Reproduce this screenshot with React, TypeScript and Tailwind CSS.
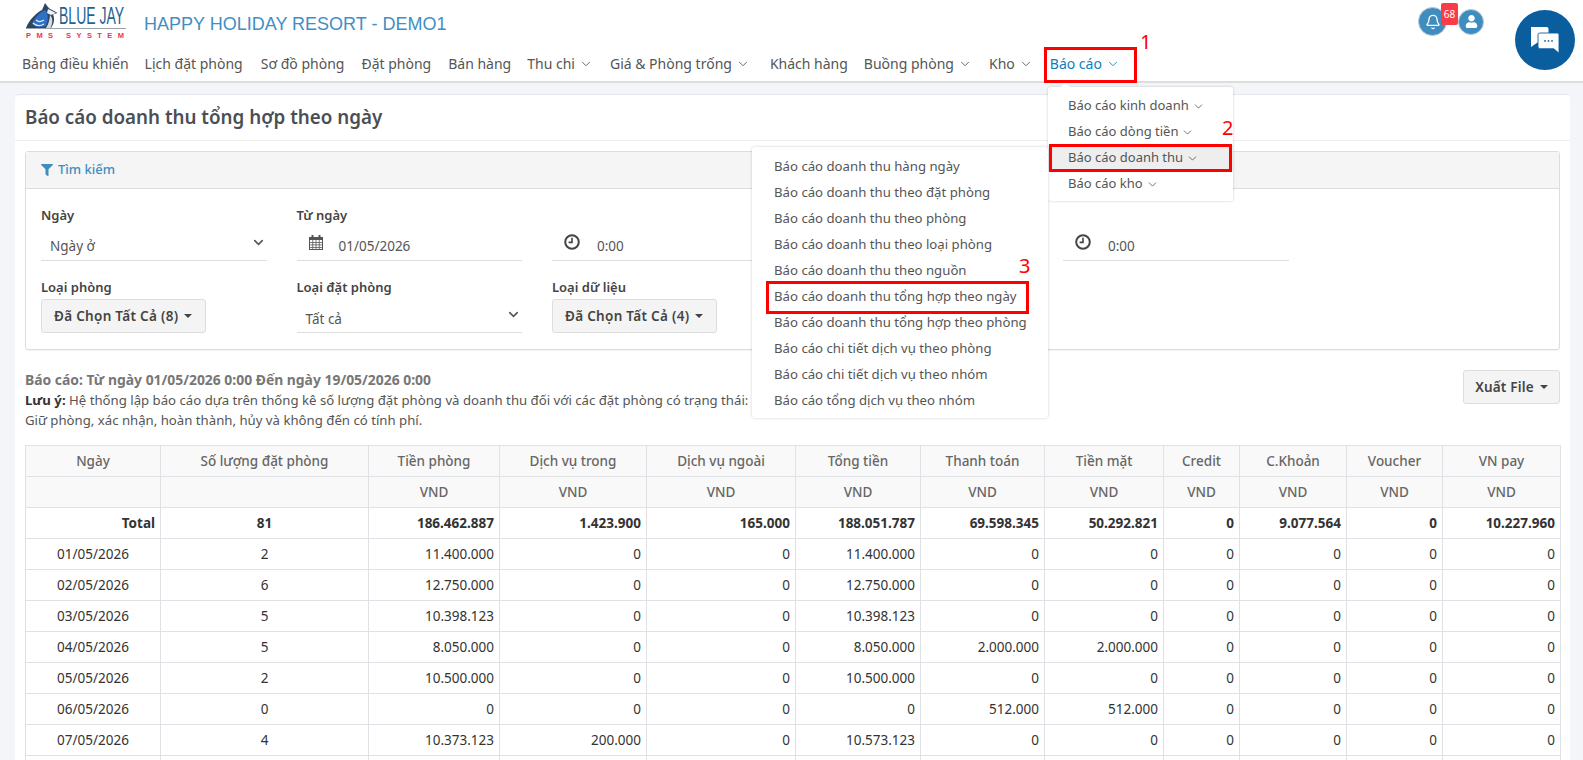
import { ChevronDown, Bell } from "lucide-react";
import { FaFilter, FaUser } from "react-icons/fa";

const navItems = [
  { label: "Bảng điều khiển" },
  { label: "Lịch đặt phòng", cls: "-ml-px" },
  { label: "Sơ đồ phòng", cls: "ml-px" },
  { label: "Đặt phòng" },
  { label: "Bán hàng" },
  { label: "Thu chi", arrow: true, cls: "-ml-px" },
  { label: "Giá & Phòng trống", arrow: true },
  { label: "Khách hàng", cls: "ml-[3px]" },
  { label: "Buồng phòng", arrow: true, cls: "-ml-px" },
  { label: "Kho", arrow: true },
];

const subMenu = [
  "Báo cáo doanh thu hàng ngày",
  "Báo cáo doanh thu theo đặt phòng",
  "Báo cáo doanh thu theo phòng",
  "Báo cáo doanh thu theo loại phòng",
  "Báo cáo doanh thu theo nguồn",
  "Báo cáo doanh thu tổng hợp theo ngày",
  "Báo cáo doanh thu tổng hợp theo phòng",
  "Báo cáo chi tiết dịch vụ theo phòng",
  "Báo cáo chi tiết dịch vụ theo nhóm",
  "Báo cáo tổng dịch vụ theo nhóm",
];

const reportMenu = ["Báo cáo kinh doanh", "Báo cáo dòng tiền", "Báo cáo doanh thu", "Báo cáo kho"];

const headers = ["Ngày", "Số lượng đặt phòng", "Tiền phòng", "Dịch vụ trong", "Dịch vụ ngoài", "Tổng tiền", "Thanh toán", "Tiền mặt", "Credit", "C.Khoản", "Voucher", "VN pay"];

const total = ["Total", "81", "186.462.887", "1.423.900", "165.000", "188.051.787", "69.598.345", "50.292.821", "0", "9.077.564", "0", "10.227.960"];

const rows = [
  ["01/05/2026", "2", "11.400.000", "0", "0", "11.400.000", "0", "0", "0", "0", "0", "0"],
  ["02/05/2026", "6", "12.750.000", "0", "0", "12.750.000", "0", "0", "0", "0", "0", "0"],
  ["03/05/2026", "5", "10.398.123", "0", "0", "10.398.123", "0", "0", "0", "0", "0", "0"],
  ["04/05/2026", "5", "8.050.000", "0", "0", "8.050.000", "2.000.000", "2.000.000", "0", "0", "0", "0"],
  ["05/05/2026", "2", "10.500.000", "0", "0", "10.500.000", "0", "0", "0", "0", "0", "0"],
  ["06/05/2026", "0", "0", "0", "0", "0", "512.000", "512.000", "0", "0", "0", "0"],
  ["07/05/2026", "4", "10.373.123", "200.000", "0", "10.573.123", "0", "0", "0", "0", "0", "0"],
];

const Logo = () => (
  <svg width="108" height="40" viewBox="0 0 108 40" className="shrink-0">
    <path d="M1 26 C4 18 11 11 17 8 L20 1 L23 5 L25 7 C27 8 30 9 32.5 11 L28 12.5 C30 17 29 22 26 26 Z" fill="#2e4660" />
    <path d="M7 22 C10 15 15 10 20 8 C23 11 24 17 21 24 C16 26 11 25 7 22 Z" fill="#2f6fc6" />
    <path d="M8 21 C11 24 15 24.5 19 22 M11 18 C13 20 16 20 19 18" stroke="#dce8f5" strokeWidth="1.3" fill="none" />
    <path d="M23 7 L31 11 L26 13 L22 11 Z" fill="#eef2f6" />
    <path d="M25 13 C28 16 28 21 25.5 26 L21 26 C24 22 24.5 17 25 13 Z" fill="#d5dbe0" />
    <rect x="1" y="26" width="100" height="1" fill="#9aa3ab" />
    <text transform="translate(34 22) scale(0.584 1)" fontFamily="'Liberation Sans', sans-serif" fontSize="24" fill="#1f6491">BLUE JAY</text>
    <text x="1" y="36" fontFamily="'Liberation Sans', sans-serif" fontSize="7.5" fontWeight="700" fill="#f3344a" textLength="98" lengthAdjust="spacing">PMS SYSTEM</text>
  </svg>
);

const CalendarIcon = () => (
  <svg width="14" height="15" viewBox="0 0 14 15" fill="#555" className="shrink-0">
    <rect x="2.5" y="0" width="2" height="3" />
    <rect x="9.5" y="0" width="2" height="3" />
    <path fillRule="evenodd" d="M0 2h14v13H0z M1 5v9h12V5z" />
    <path d="M1 7h12v.8H1z M1 9.5h12v.8H1z M1 12h12v.8H1z M3.4 5h.8v9h-.8z M6.6 5h.8v9h-.8z M9.8 5h.8v9h-.8z" />
  </svg>
);

const ClockIcon = () => (
  <svg width="16" height="16" viewBox="0 0 16 16" fill="none" stroke="#444" className="shrink-0">
    <circle cx="8" cy="8" r="6.8" strokeWidth="2" />
    <path d="M8 3.8V8.4H4.6" strokeWidth="1.6" />
  </svg>
);

const ChatIcon = () => (
  <svg width="32" height="28" viewBox="0 0 36 32">
    <path d="M2 1h18a2 2 0 0 1 2 2v14a2 2 0 0 1-2 2H9l-7 5z" fill="#fff" />
    <path d="M12 8h20a2 2 0 0 1 2 2v14v7l-6-5H12a2 2 0 0 1-2-2V10a2 2 0 0 1 2-2z" fill="#fff" stroke="#0b5e9e" strokeWidth="1" />
    <circle cx="18" cy="17" r="1" fill="#0b5e9e" />
    <circle cx="22" cy="17" r="1" fill="#0b5e9e" />
    <circle cx="26" cy="17" r="1" fill="#0b5e9e" />
  </svg>
);

const Caret = () => <span className="ml-[6px] inline-block border-x-[4px] border-t-[4px] border-x-transparent border-t-[#444] align-middle" />;

const Label = ({ children }: { children: string }) => (
  <div className="h-5 text-[13px] leading-5 font-semibold text-[#444]">{children}</div>
);

const MultiButton = ({ text }: { text: string }) => (
  <div className="mt-[2px] flex h-[34px] w-[165px] items-center rounded-[3px] border border-[#ddd] bg-[#f4f4f4] pl-[12px] text-[13.5px] font-semibold tracking-[0.3px] whitespace-nowrap text-[#444]">
    {text}
    <Caret />
  </div>
);

const Underlined = ({ children }: { children: React.ReactNode }) => (
  <div className="flex h-9 items-center border-b border-[#ddd] text-[13.5px] text-[#555]">{children}</div>
);

const TimeField = () => (
  <Underlined>
    <span className="mb-[2px] ml-3"><ClockIcon /></span>
    <span className="ml-[17px] pt-2">0:00</span>
  </Underlined>
);

const App = () => {
  return (
    <div className="relative h-[760px] overflow-hidden bg-[#f3f5f9] font-['Noto_Sans',sans-serif] text-[13.5px] text-[#333]">
      <header className="h-[83px] border-b-2 border-[#ddd] bg-white">
        <div className="flex h-[46px] items-start pl-[25px]">
          <div className="pt-[2px]"><Logo /></div>
          <div className="ml-[11px] pt-[12px] font-['Liberation_Sans',sans-serif] text-[18px] leading-6 text-[#3f8fc4]">HAPPY HOLIDAY RESORT - DEMO1</div>
          <div className="mr-[99px] ml-auto flex items-center pt-[7px]">
            <div className="relative flex size-[29px] items-center justify-center rounded-full border border-[#b9c9d4] bg-[#3f8dbf]">
              <Bell size={16} color="#fff" />
              <span className="absolute top-[-5px] left-[22px] flex h-[22px] w-[17px] items-center justify-center rounded-[2px] bg-[#fb3c47] text-[10px] text-white">68</span>
            </div>
            <div className="ml-[11px] flex size-[26px] items-center justify-center rounded-full border border-[#b9c9d4] bg-[#3f8dbf]">
              <FaUser size={13} color="#fff" />
            </div>
          </div>
        </div>
        <nav className="flex h-[35px] items-center gap-[17px] pl-[22px] text-[14px] whitespace-nowrap text-[#555]">
          {navItems.map((item) => (
            <span key={item.label} className={`flex items-center gap-[4px] ${item.cls ?? ""}`}>
              {item.label}
              {item.arrow && <ChevronDown size={14} strokeWidth={1.5} />}
            </span>
          ))}
          <span className="flex items-center gap-[4px] text-[#0d7fc0]">
            Báo cáo
            <ChevronDown size={14} strokeWidth={1.5} />
          </span>
        </nav>
      </header>

      <main className="mt-[11px] mr-[13px] ml-[15px] h-[700px] rounded-t border-t border-[#e3e6ea] bg-white">
        <h1 className="flex h-[46px] items-center border-b border-[#eee] pl-[10px] text-[18.8px] font-semibold text-[#4a4f55]">Báo cáo doanh thu tổng hợp theo ngày</h1>
        <div className="px-[10px] pt-[10px]">
          <section className="rounded-[3px] border border-[#ddd] shadow-[0_1px_1px_rgba(0,0,0,0.05)]">
            <div className="flex h-[37px] items-center gap-[5px] border-b border-[#ddd] bg-[#f5f5f5] pl-[15px] text-[13px] font-medium text-[#3f8dbf]">
              <FaFilter size={12} />
              Tìm kiếm
            </div>
            <div className="grid grid-cols-6 gap-y-4 pt-4 pb-4">
              <div className="px-[15px]">
                <Label>Ngày</Label>
                <Underlined>
                  <span className="ml-[9px] pt-2">Ngày ở</span>
                  <ChevronDown size={15} strokeWidth={2.5} className="mr-[1px] ml-auto" />
                </Underlined>
              </div>
              <div className="px-[15px]">
                <Label>Từ ngày</Label>
                <Underlined>
                  <span className="ml-3"><CalendarIcon /></span>
                  <span className="ml-4 pt-2">01/05/2026</span>
                </Underlined>
              </div>
              <div className="px-[15px]">
                <div className="h-5" />
                <TimeField />
              </div>
              {/* this column sits under the open submenu */}
              <div />
              <div className="px-[15px]">
                <div className="h-5" />
                <TimeField />
              </div>
              <div />
              <div className="px-[15px]">
                <Label>Loại phòng</Label>
                <MultiButton text="Đã Chọn Tất Cả (8)" />
              </div>
              <div className="px-[15px]">
                <Label>Loại đặt phòng</Label>
                <Underlined>
                  <span className="ml-[9px] pt-[9px]">Tất cả</span>
                  <ChevronDown size={15} strokeWidth={2.5} className="mr-[1px] ml-auto" />
                </Underlined>
              </div>
              <div className="px-[15px]">
                <Label>Loại dữ liệu</Label>
                <MultiButton text="Đã Chọn Tất Cả (4)" />
              </div>
            </div>
          </section>

          <div className="mt-[20px] flex items-start justify-between">
            <div className="text-[13.2px] leading-5 text-[#555]">
              <div className="text-[13.9px] font-bold text-[#777]">Báo cáo: Từ ngày 01/05/2026 0:00 Đến ngày 19/05/2026 0:00</div>
              <div><b className="text-[#333]">Lưu ý:</b> Hệ thống lập báo cáo dựa trên thống kê số lượng đặt phòng và doanh thu đối với các đặt phòng có trạng thái:</div>
              <div>Giữ phòng, xác nhận, hoàn thành, hủy và không đến có tính phí.</div>
            </div>
            <div className="flex h-[34px] w-[97px] items-center justify-center rounded-[3px] border border-[#ddd] bg-[#f4f4f4] font-semibold tracking-[0.2px] text-[#444]">
              Xuất File
              <Caret />
            </div>
          </div>

          <table className="mt-[15px] w-[1535px] table-fixed border-collapse text-[13.5px]">
            <colgroup>
              <col className="w-[135px]" />
              <col className="w-[208px]" />
              <col className="w-[131px]" />
              <col className="w-[147px]" />
              <col className="w-[149px]" />
              <col className="w-[125px]" />
              <col className="w-[124px]" />
              <col className="w-[119px]" />
              <col className="w-[76px]" />
              <col className="w-[107px]" />
              <col className="w-[96px]" />
              <col className="w-[118px]" />
            </colgroup>
            <thead className="bg-[#f9f9f9] font-medium text-[#666]">
              <tr className="h-[31px]">
                {headers.map((h) => (
                  <th key={h} className="border border-[#dee2e6] font-medium">{h}</th>
                ))}
              </tr>
              <tr className="h-[31px]">
                {headers.map((h, i) => (
                  <th key={h} className="border border-[#dee2e6] font-medium">{i > 1 ? "VND" : ""}</th>
                ))}
              </tr>
            </thead>
            <tbody>
              <tr className="h-[31px] font-bold">
                {total.map((v, i) => (
                  <td key={i} className={`border border-[#dee2e6] px-[5px] ${i === 1 ? "text-center" : "text-right"}`}>{v}</td>
                ))}
              </tr>
              {rows.map((row) => (
                <tr key={row[0]} className="h-[31px]">
                  {row.map((v, i) => (
                    <td key={i} className={`border border-[#dee2e6] px-[5px] ${i < 2 ? "text-center" : "text-right"}`}>{v}</td>
                  ))}
                </tr>
              ))}
              <tr className="h-[31px]">
                {headers.map((h) => (
                  <td key={h} className="border border-[#dee2e6]" />
                ))}
              </tr>
            </tbody>
          </table>
        </div>
      </main>

      {/* opened menus, annotation boxes on top of the page */}
      <div className="absolute top-[87px] left-[1048px] h-[114px] w-[185px] rounded-[3px] bg-white py-[6px] text-[13px] text-[#555] shadow-[0_0_3px_rgba(0,0,0,0.2)]">
        <span className="absolute top-[-3px] left-[14px] size-[7px] rotate-45 bg-white" />
        {reportMenu.map((label, i) => (
          <div key={label} className={`flex h-[26px] items-center gap-[3px] pl-[20px] ${i === 2 ? "bg-[#eee]" : ""}`}>
            {label}
            <ChevronDown size={13} strokeWidth={1.5} />
          </div>
        ))}
      </div>

      <div className="absolute top-[147px] left-[752px] h-[271px] w-[296px] rounded-[3px] bg-white py-[7px] text-[13.2px] text-[#555] shadow-[0_0_3px_rgba(0,0,0,0.2)]">
        {subMenu.map((label) => (
          <div key={label} className="flex h-[26px] items-center pl-[22px] whitespace-nowrap">{label}</div>
        ))}
      </div>

      <div className="absolute top-[47px] left-[1044px] h-[36px] w-[93px] border-[3px] border-[#f00]" />
      <div className="absolute top-[144px] left-[1049px] h-[28px] w-[183px] border-[3px] border-[#f00]" />
      <div className="absolute top-[281px] left-[766px] h-[33px] w-[263px] border-[3px] border-[#f00]" />
      <span className="absolute top-[28px] left-[1140px] text-[20px] leading-7 text-[#f00]">1</span>
      <span className="absolute top-[114px] left-[1222px] text-[20px] leading-7 text-[#f00]">2</span>
      <span className="absolute top-[252px] left-[1019px] text-[20px] leading-7 text-[#f00]">3</span>

      <div className="absolute top-[10px] left-[1515px] flex size-[60px] items-center justify-center rounded-full bg-[#0b5e9e]">
        <ChatIcon />
      </div>
    </div>
  );
};

export default App;
